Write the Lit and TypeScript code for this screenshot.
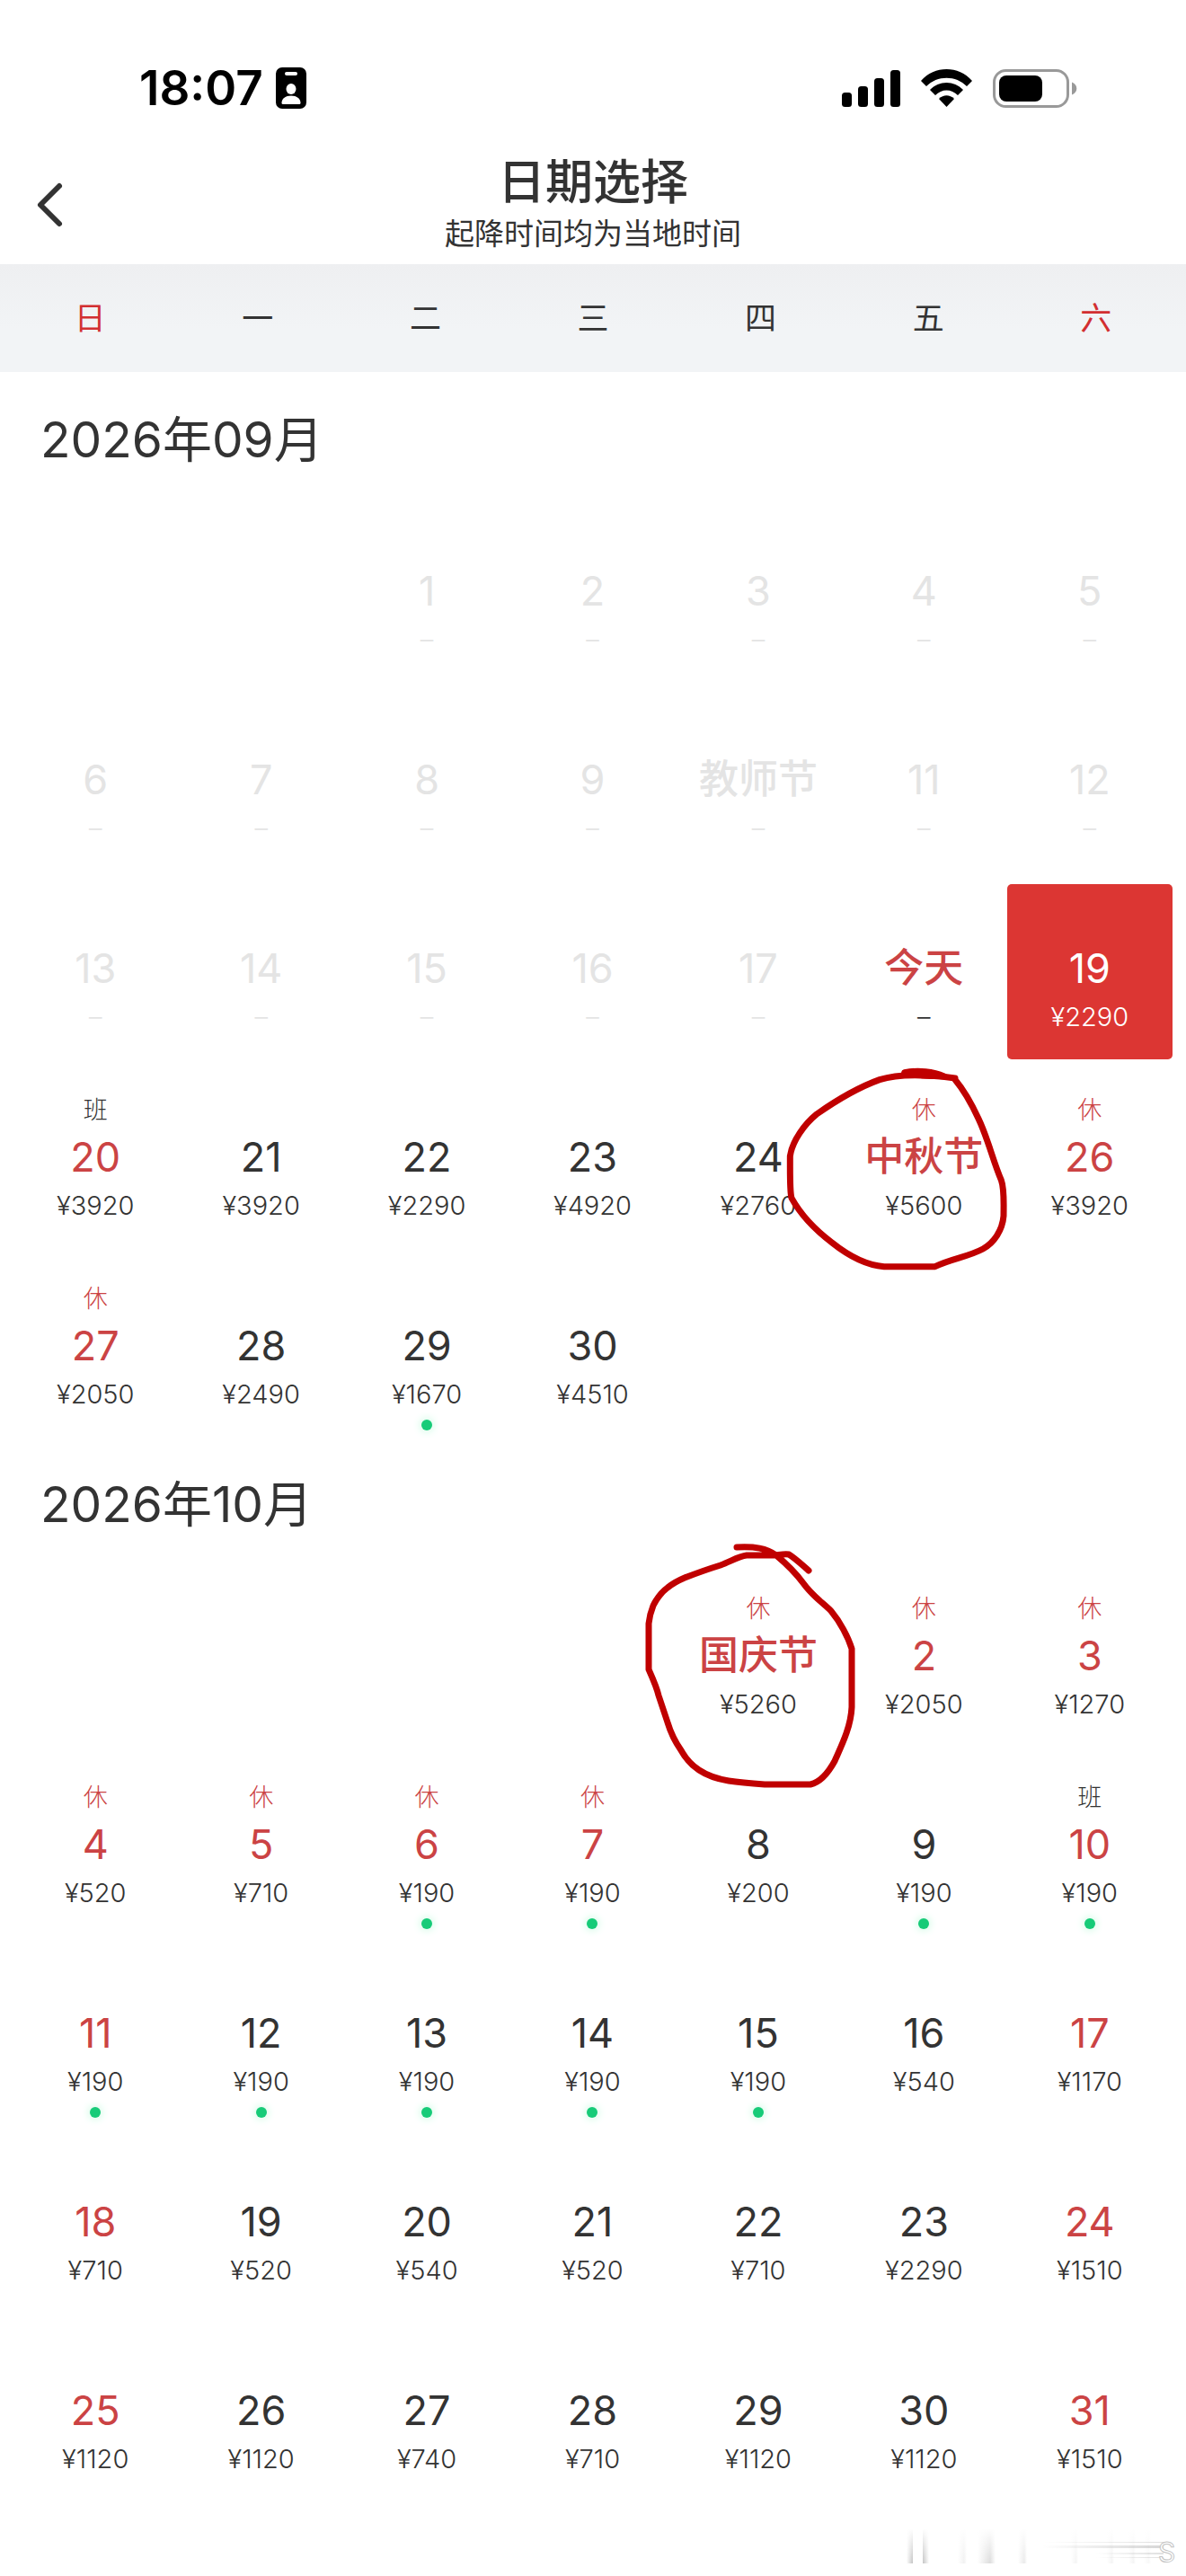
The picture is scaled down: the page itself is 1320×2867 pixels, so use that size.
import { LitElement, html, svg, css, nothing } from "lit";
import { customElement, property, state } from "lit/decorators.js";
import { classMap } from "lit/directives/class-map.js";

interface Day {
  day: number;
  label?: string;
  price?: number;
  tag?: "休" | "班";
  red?: boolean;
  past?: boolean;
  low?: boolean;
  mark?: "mid-autumn" | "national";
}

interface Month {
  title: string;
  key: string;
  offset: number;
  days: Day[];
}

const buildMonth = (
  title: string,
  key: string,
  offset: number,
  prices: (number | undefined)[],
  extra: Record<number, Partial<Day>>,
): Month => ({
  title,
  key,
  offset,
  days: prices.map((price, i) => {
    const day = i + 1;
    const column = (offset + i) % 7;
    return { day, price, red: column === 0 || column === 6, ...extra[day] };
  }),
});

const past: Record<number, Partial<Day>> = {};
for (let d = 1; d <= 17; d++) past[d] = { past: true, red: false };
past[10] = { past: true, red: false, label: "教师节" };

const MONTHS: Month[] = [
  buildMonth(
    "2026年09月",
    "2026-09",
    2,
    [
      ...new Array(18).fill(undefined),
      2290, 3920, 3920, 2290, 4920, 2760, 5600, 3920, 2050, 2490, 1670, 4510,
    ],
    {
      ...past,
      18: { label: "今天", red: true },
      20: { tag: "班", red: true },
      25: { tag: "休", label: "中秋节", red: true, mark: "mid-autumn" },
      26: { tag: "休" },
      27: { tag: "休" },
      29: { low: true },
    },
  ),
  buildMonth(
    "2026年10月",
    "2026-10",
    4,
    [
      5260, 2050, 1270, 520, 710, 190, 190, 200, 190, 190, 190, 190, 190, 190, 190, 540,
      1170, 710, 520, 540, 520, 710, 2290, 1510, 1120, 1120, 740, 710, 1120, 1120, 1510,
    ],
    {
      1: { tag: "休", label: "国庆节", red: true, mark: "national" },
      2: { tag: "休", red: true },
      3: { tag: "休" },
      4: { tag: "休" },
      5: { tag: "休", red: true },
      6: { tag: "休", red: true, low: true },
      7: { tag: "休", red: true, low: true },
      9: { low: true },
      10: { tag: "班", low: true },
      11: { low: true },
      12: { low: true },
      13: { low: true },
      14: { low: true },
      15: { low: true },
    },
  ),
];

const FONT = css`Inter, "Noto Sans CJK SC", sans-serif`;

@customElement("status-bar")
class StatusBar extends LitElement {
  static styles = css`
    :host {
      display: flex;
      justify-content: space-between;
      align-items: center;
      height: 46px;
      padding: 75px 121px 37px 155px;
      font-family: ${FONT};
      color: #000;
    }
    .left {
      display: flex;
      align-items: center;
      gap: 14px;
    }
    .time {
      font-size: 53px;
      line-height: 46px;
      font-weight: 600;
    }
    .right {
      display: flex;
      align-items: center;
      gap: 23px;
    }
    svg {
      display: block;
    }
  `;

  render() {
    return html`
      <div class="left">
        <span class="time">18:07</span>
        <svg width="34" height="46" viewBox="0 0 34 46" aria-hidden="true">
          <rect width="34" height="46" rx="7" />
          <rect x="10" y="5" width="14" height="4" rx="2" fill="#fff" />
          <ellipse cx="17" cy="24" rx="5.5" ry="6" fill="#fff" />
          <path d="M6.500 39.500C6.500 34.500 11 31.500 17 31.500S27.500 34.500 27.500 39.500Q27.500 41 26 41H8Q6.500 41 6.500 39.500Z" fill="#fff" />
        </svg>
      </div>
      <div class="right">
        <svg width="65" height="43" viewBox="0 0 65 43" aria-hidden="true">
          <rect x="0" y="26" width="11" height="16" rx="3.500" />
          <rect x="18" y="19" width="11" height="23" rx="3.500" />
          <rect x="36" y="10" width="11" height="32" rx="3.500" />
          <rect x="54" y="1" width="11" height="41" rx="3.500" />
        </svg>
        <svg width="57" height="43" viewBox="0 0 57 43" aria-hidden="true">
          <path d="M0 13C15-4.300 42-4.300 57 13L51 19C39 6.500 18 6.500 6 19Z" />
          <path d="M10 23C20 12.300 37 12.300 47 23L41 29C34 21.500 23 21.500 16 29Z" />
          <path d="M20 33C25 28 32 28 37 33L28.500 42Z" />
        </svg>
        <svg width="94" height="43" viewBox="0 0 94 43" aria-hidden="true">
          <rect x="1.500" y="1.500" width="82" height="40" rx="13" fill="none" stroke="#999" stroke-width="3" />
          <rect x="7" y="7" width="48" height="29" rx="8" />
          <path d="M88 14.500C95 17 95 26 88 28.500Z" fill="#999" />
        </svg>
      </div>
    `;
  }
}

@customElement("day-cell")
class DayCell extends LitElement {
  @property({ attribute: false }) day!: Day;
  @property({ type: Boolean }) selected = false;

  static styles = css`
    :host {
      display: block;
      position: relative;
      min-width: 0;
      font-family: ${FONT};
    }
    .cell {
      display: flex;
      flex-direction: column;
      align-items: center;
      box-sizing: border-box;
      width: 100%;
      height: 195px;
      margin: 0;
      padding: 24px 0 0;
      border: 0;
      border-radius: 5px;
      background: none;
      font: inherit;
      color: #333;
      cursor: pointer;
    }
    .tag {
      height: 36px;
      font-size: 27px;
      line-height: 36px;
      font-weight: 300;
    }
    .number {
      height: 67px;
      font-size: 45px;
      line-height: 67px;
      white-space: nowrap;
    }
    .named {
      font-size: 44px;
      font-weight: 500;
    }
    .price {
      height: 42px;
      font-size: 29px;
      line-height: 42px;
      font-weight: 300;
    }
    .dot {
      width: 12px;
      height: 12px;
      margin-top: 7px;
      border-radius: 50%;
      background: #17cb78;
      box-shadow: 0 0 8px 2px #d6fbe8;
    }
    .red .number,
    .rest {
      color: #cb4344;
    }
    .past {
      color: #e4e4e4;
      cursor: default;
    }
    .selected,
    .selected .number {
      color: #fff;
    }
    .selected {
      background: #dc3633;
    }
    .mark {
      position: absolute;
      z-index: 1;
      overflow: visible;
      pointer-events: none;
      fill: none;
      stroke: #c00000;
      stroke-linecap: round;
      stroke-linejoin: round;
    }
    .mid-autumn {
      left: calc(50% - 169px);
      top: -14px;
    }
    .national {
      left: calc(50% - 164px);
      top: -49px;
    }
  `;

  private renderMark() {
    if (this.day.mark === "mid-autumn") {
      return html`<svg class="mark mid-autumn" width="280" height="240" viewBox="0 0 840 720" stroke-width="21" aria-hidden="true">
        ${svg`<path d="M610 62C640 98 665 140 690 195C722 262 738 335 766 400C777 430 774 475 774 520C770 568 742 610 705 630C655 657 600 662 545 689L375 689C300 683 240 640 200 608C150 570 100 522 66 460C60 440 61 400 61 320C68 270 110 212 150 180C200 145 285 92 360 65C400 52 440 50 480 50L560 53L612 60" />
        <path fill="#c00000" d="M443 41C490 32 540 38 575 54L500 50Z" />`}
      </svg>`;
    }
    if (this.day.mark === "national") {
      return html`<svg class="mark national" width="280" height="300" viewBox="0 0 280 300" stroke-width="7" aria-hidden="true">
        ${svg`<path d="M140 22C160 21 173 23 184 31C197 42 206 51 214 62C224 76 236 84 245 93C255 105 264 122 268 135L268 200C267 222 257 242 249 260C243 271 235 283 222 286L171 286C157 285 144 284 131 282C119 280 107 276 98 270C89 264 83 257 78 248C71 238 66 227 63 217L53 187C51 178 46 167 42 158L42 107C43 97 45 92 47 87C51 79 56 72 63 67C69 62 75 59 82 56C95 51 109 46 122 42C133 38 142 32 151 31L184 31C190 30 194 29 198 30C206 35 213 42 220 48" />`}
      </svg>`;
    }
    return nothing;
  }

  render() {
    const { day, label, price, tag, red, past, low } = this.day;
    return html`
      <button
        type="button"
        class=${classMap({ cell: true, red: !!red, past: !!past, selected: this.selected })}
        ?disabled=${!!past}
        aria-pressed=${this.selected ? "true" : "false"}
      >
        <span class=${classMap({ tag: true, rest: tag === "休" })}>${tag ?? ""}</span>
        <span class=${classMap({ number: true, named: !!label })}>${label ?? day}</span>
        <span class="price">${price === undefined ? "–" : `¥${price}`}</span>
        ${low ? html`<span class="dot"></span>` : nothing}
      </button>
      ${this.renderMark()}
    `;
  }
}

@customElement("app-root")
class AppRoot extends LitElement {
  @state() private selected = "2026-09-19";

  static styles = css`
    :host {
      display: block;
      background: #fff;
      color: #333;
      font-family: ${FONT};
    }
    .bar {
      display: grid;
      grid-template-columns: 120px 1fr 120px;
      align-items: center;
      box-sizing: border-box;
      height: 136px;
      padding-top: 4px;
    }
    .back {
      justify-self: start;
      margin: 0;
      padding: 4px 38px;
      border: 0;
      background: none;
      cursor: pointer;
    }
    .back svg {
      display: block;
    }
    .heading {
      text-align: center;
    }
    .title {
      margin: 0;
      font-size: 53px;
      line-height: 64px;
      font-weight: 500;
    }
    .subtitle {
      margin: 0;
      font-size: 33px;
      line-height: 50px;
    }
    .weekdays {
      display: grid;
      grid-template-columns: repeat(7, 1fr);
      margin: 0;
      padding: 0 7px;
      list-style: none;
      text-align: center;
      font-size: 35px;
      line-height: 120px;
      background: linear-gradient(#eeeff1, #f2f4f6 60%, #f2f4f6);
    }
    .weekend {
      color: #d22f31;
    }
    .month-title {
      margin: 0;
      padding: 0 45px;
      font-size: 55px;
      line-height: 150px;
      font-weight: 400;
    }
    .grid {
      display: grid;
      grid-template-columns: repeat(7, 1fr);
      row-gap: 15px;
      padding: 0 15px 0 14px;
    }
    .footer {
      display: flex;
      justify-content: flex-end;
      padding-top: 15px;
    }
    .footer svg {
      display: block;
    }
    .glyph {
      font-family: Inter, sans-serif;
      font-size: 30px;
      fill: #fff;
      stroke: #c4c4c4;
      stroke-width: 1px;
    }
  `;

  private renderMonth(month: Month) {
    return html`
      <section>
        <h2 class="month-title">${month.title}</h2>
        <div class="grid">
          ${month.days.map((day, i) => {
            const key = `${month.key}-${String(day.day).padStart(2, "0")}`;
            return html`<day-cell
              style=${i === 0 ? `grid-column-start:${month.offset + 1}` : nothing}
              .day=${day}
              .selected=${this.selected === key}
              @click=${() => {
                if (!day.past) this.selected = key;
              }}
            ></day-cell>`;
          })}
        </div>
      </section>
    `;
  }

  render() {
    const names = ["日", "一", "二", "三", "四", "五", "六"];
    return html`
      <status-bar></status-bar>
      <header class="bar">
        <button class="back" type="button" aria-label="返回">
          <svg width="34" height="52" viewBox="0 0 34 52" fill="none" stroke="#333" stroke-width="6" stroke-linecap="round" stroke-linejoin="round" aria-hidden="true">
            <path d="M28 5L7 26L28 47" />
          </svg>
        </button>
        <div class="heading">
          <h1 class="title">日期选择</h1>
          <p class="subtitle">起降时间均为当地时间</p>
        </div>
      </header>
      <ul class="weekdays">
        ${names.map((n, i) => html`<li class=${classMap({ weekend: i % 6 === 0 })}>${n}</li>`)}
      </ul>
      <main>${MONTHS.map((m) => this.renderMonth(m))}</main>
      <footer class="footer">
        <svg width="330" height="68" viewBox="0 9 330 68" aria-hidden="true">
          <defs>
            <linearGradient id="fade" x1="0" y1="0" x2="0" y2="1">
              <stop offset="0" stop-color="#fff" />
              <stop offset="1" stop-color="#fff" stop-opacity="0" />
            </linearGradient>
            <linearGradient id="edge-left">
              <stop offset="0" stop-color="#999" stop-opacity="0" />
              <stop offset="1" stop-color="#999" stop-opacity="0.600" />
            </linearGradient>
            <linearGradient id="edge-right">
              <stop offset="0" stop-color="#999" stop-opacity="0.600" />
              <stop offset="1" stop-color="#999" stop-opacity="0" />
            </linearGradient>
            <linearGradient id="band">
              <stop offset="0" stop-color="#999" stop-opacity="0" />
              <stop offset="0.700" stop-color="#999" stop-opacity="0.350" />
              <stop offset="1" stop-color="#999" stop-opacity="0" />
            </linearGradient>
            <linearGradient id="streak">
              <stop offset="0" stop-color="#999" stop-opacity="0" />
              <stop offset="1" stop-color="#999" stop-opacity="0.500" />
            </linearGradient>
          </defs>
          <rect x="19" y="25" width="7" height="38" fill="url(#edge-left)" />
          <rect x="37" y="25" width="7" height="38" fill="url(#edge-right)" />
          <rect x="76" y="25" width="10" height="38" fill="url(#band)" opacity="0.400" />
          <rect x="98" y="25" width="20" height="38" fill="url(#band)" />
          <rect x="143" y="25" width="10" height="38" fill="url(#band)" opacity="0.600" />
          <rect x="202" y="25" width="8" height="38" fill="url(#band)" opacity="0.300" />
          <rect x="242" y="25" width="8" height="38" fill="url(#band)" opacity="0.300" />
          <rect x="266" y="25" width="8" height="38" fill="url(#band)" opacity="0.300" />
          <rect x="283" y="25" width="8" height="38" fill="url(#band)" opacity="0.200" />
          <rect x="15" y="24" width="290" height="40" fill="url(#fade)" />
          <rect x="170" y="39" width="135" height="1" fill="url(#streak)" opacity="0.600" />
          <rect x="170" y="43" width="135" height="3" fill="url(#streak)" opacity="0.800" />
          <rect x="230" y="51" width="75" height="2" fill="url(#streak)" opacity="0.600" />
          <rect x="230" y="56" width="75" height="1" fill="url(#streak)" opacity="0.600" />
          <text class="glyph" x="299" y="61">S</text>
        </svg>
      </footer>
    `;
  }
}
